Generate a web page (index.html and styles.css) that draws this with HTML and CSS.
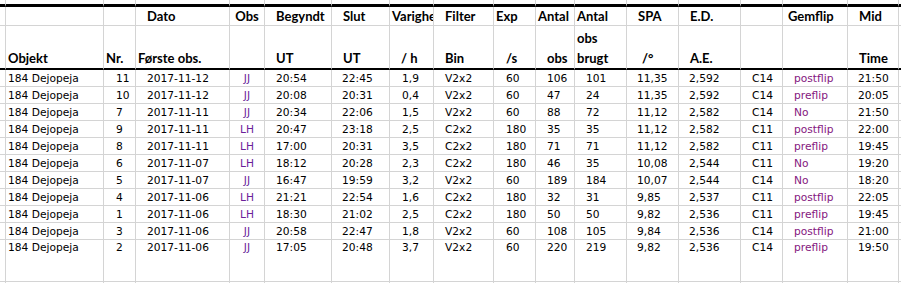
FILE: index.html
```html
<!DOCTYPE html>
<html lang="da">
<head>
    <meta charset="UTF-8">
    <title>184 Dejopeja - observationer</title>
    <link rel="stylesheet" href="styles.css">
</head>
<body>
    <table class="sheet">
        <colgroup>
            <col class="w-stub">
            <col class="w-objekt">
            <col class="w-nr">
            <col class="w-dato">
            <col class="w-obs">
            <col class="w-beg">
            <col class="w-slut">
            <col class="w-var">
            <col class="w-filter">
            <col class="w-exp">
            <col class="w-antal">
            <col class="w-brugt">
            <col class="w-spa">
            <col class="w-ed">
            <col class="w-tel">
            <col class="w-flip">
            <col class="w-mid">
            <col class="w-tail">
        </colgroup>
        <thead>
            <tr class="sliver">
                <td></td><td></td><td></td><td></td><td></td><td></td><td></td><td></td><td></td>
                <td></td><td></td><td></td><td></td><td></td><td></td><td></td><td></td><td></td>
            </tr>
            <tr class="head1">
                <th></th>
                <th></th>
                <th></th>
                <th>Dato</th>
                <th class="c">Obs</th>
                <th>Begyndt</th>
                <th>Slut</th>
                <th class="flush">Varighed</th>
                <th>Filter</th>
                <th class="flush">Exp</th>
                <th class="flush">Antal</th>
                <th class="flush">Antal</th>
                <th>SPA</th>
                <th>E.D.</th>
                <th></th>
                <th class="gem">Gemflip</th>
                <th>Mid</th>
                <th></th>
            </tr>
            <tr class="head2">
                <th></th>
                <th class="flush">Objekt</th>
                <th class="flush">Nr.</th>
                <th class="flush">Første obs.</th>
                <th></th>
                <th>UT</th>
                <th>UT</th>
                <th>/ h</th>
                <th>Bin</th>
                <th class="wide">/s</th>
                <th>obs</th>
                <th class="flush two">obs<br>brugt</th>
                <th class="deg">/°</th>
                <th>A.E.</th>
                <th></th>
                <th></th>
                <th>Time</th>
                <th></th>
            </tr>
        </thead>
        <tbody>
            <tr><td></td><td>184 Dejopeja</td><td>11</td><td>2017-11-12</td><td class="obs">JJ</td><td>20:54</td><td>22:45</td><td>1,9</td><td>V2x2</td><td>60</td><td>106</td><td>101</td><td>11,35</td><td>2,592</td><td>C14</td><td class="flip">postflip</td><td>21:50</td><td></td></tr>
            <tr><td></td><td>184 Dejopeja</td><td>10</td><td>2017-11-12</td><td class="obs">JJ</td><td>20:08</td><td>20:31</td><td>0,4</td><td>V2x2</td><td>60</td><td>47</td><td>24</td><td>11,35</td><td>2,592</td><td>C14</td><td class="flip">preflip</td><td>20:05</td><td></td></tr>
            <tr><td></td><td>184 Dejopeja</td><td>7</td><td>2017-11-11</td><td class="obs">JJ</td><td>20:34</td><td>22:06</td><td>1,5</td><td>V2x2</td><td>60</td><td>88</td><td>72</td><td>11,12</td><td>2,582</td><td>C14</td><td class="flip">No</td><td>21:50</td><td></td></tr>
            <tr><td></td><td>184 Dejopeja</td><td>9</td><td>2017-11-11</td><td class="obs">LH</td><td>20:47</td><td>23:18</td><td>2,5</td><td>C2x2</td><td>180</td><td>35</td><td>35</td><td>11,12</td><td>2,582</td><td>C11</td><td class="flip">postflip</td><td>22:00</td><td></td></tr>
            <tr><td></td><td>184 Dejopeja</td><td>8</td><td>2017-11-11</td><td class="obs">LH</td><td>17:00</td><td>20:31</td><td>3,5</td><td>C2x2</td><td>180</td><td>71</td><td>71</td><td>11,12</td><td>2,582</td><td>C11</td><td class="flip">preflip</td><td>19:45</td><td></td></tr>
            <tr><td></td><td>184 Dejopeja</td><td>6</td><td>2017-11-07</td><td class="obs">LH</td><td>18:12</td><td>20:28</td><td>2,3</td><td>C2x2</td><td>180</td><td>46</td><td>35</td><td>10,08</td><td>2,544</td><td>C11</td><td class="flip">No</td><td>19:20</td><td></td></tr>
            <tr><td></td><td>184 Dejopeja</td><td>5</td><td>2017-11-07</td><td class="obs">JJ</td><td>16:47</td><td>19:59</td><td>3,2</td><td>V2x2</td><td>60</td><td>189</td><td>184</td><td>10,07</td><td>2,544</td><td>C14</td><td class="flip">No</td><td>18:20</td><td></td></tr>
            <tr><td></td><td>184 Dejopeja</td><td>4</td><td>2017-11-06</td><td class="obs">LH</td><td>21:21</td><td>22:54</td><td>1,6</td><td>C2x2</td><td>180</td><td>32</td><td>31</td><td>9,85</td><td>2,537</td><td>C11</td><td class="flip">postflip</td><td>22:05</td><td></td></tr>
            <tr><td></td><td>184 Dejopeja</td><td>1</td><td>2017-11-06</td><td class="obs">LH</td><td>18:30</td><td>21:02</td><td>2,5</td><td>C2x2</td><td>180</td><td>50</td><td>50</td><td>9,82</td><td>2,536</td><td>C11</td><td class="flip">preflip</td><td>19:45</td><td></td></tr>
            <tr><td></td><td>184 Dejopeja</td><td>3</td><td>2017-11-06</td><td class="obs">JJ</td><td>20:58</td><td>22:47</td><td>1,8</td><td>V2x2</td><td>60</td><td>108</td><td>105</td><td>9,84</td><td>2,536</td><td>C14</td><td class="flip">postflip</td><td>21:00</td><td></td></tr>
            <tr class="last"><td></td><td>184 Dejopeja</td><td>2</td><td>2017-11-06</td><td class="obs">JJ</td><td>17:05</td><td>20:48</td><td>3,7</td><td>V2x2</td><td>60</td><td>220</td><td>219</td><td>9,82</td><td>2,536</td><td>C14</td><td class="flip">preflip</td><td>19:50</td><td></td></tr>
            <tr class="next">
                <td></td><td></td><td></td><td></td><td></td><td></td><td></td><td></td><td></td>
                <td></td><td></td><td></td><td></td><td></td><td></td><td></td><td></td><td></td>
            </tr>
        </tbody>
    </table>
</body>
</html>
```

FILE: styles.css
```css
body {
    margin: 0;
    background-color: white;
    overflow: hidden;
}
.sheet {
    table-layout: fixed;
    border-collapse: separate;
    border-spacing: 0;
    width: 902px;
    color: #000;
}
.w-stub { width: 6px; }
.w-objekt { width: 98px; }
.w-nr { width: 32px; }
.w-dato { width: 94px; }
.w-obs { width: 35px; }
.w-beg { width: 67px; }
.w-slut { width: 58px; }
.w-var { width: 44px; }
.w-filter { width: 60px; }
.w-exp { width: 42px; }
.w-antal { width: 39px; }
.w-brugt { width: 52px; }
.w-spa { width: 52px; }
.w-ed { width: 62px; }
.w-tel { width: 42px; }
.w-flip { width: 65px; }
.w-mid { width: 51px; }
.w-tail { width: 3px; }

.sheet th,
.sheet td {
    box-sizing: border-box;
    padding: 0;
    border-right: 1px solid #d4d4d4;
    border-bottom: 1px solid #d4d4d4;
    white-space: nowrap;
    overflow: hidden;
    vertical-align: top;
    text-align: left;
}
.sheet th:last-child,
.sheet td:last-child {
    border-right: none;
}

/* top row is only a sliver of the row above */
.sheet .sliver td {
    height: 7px;
    border-bottom: 3px solid #000;
}

.sheet th {
    font-family: Lato, "Liberation Sans", sans-serif;
    font-weight: 700;
    font-size: 13px;
    padding-left: 11px;
}
.head1 th {
    height: 19px;
    line-height: 16px;
    padding-top: 1px;
}
.head2 th {
    height: 42px;
    line-height: 20px;
    padding-top: 22px;
    border-bottom: 2px solid #000;
}
.head2 th.two {
    padding-top: 2px;
}
.sheet th.flush { padding-left: 2px; }
.sheet th.gem { padding-left: 5px; }
.sheet th.wide { padding-left: 12px; }
.sheet th.deg { padding-left: 15px; }
.sheet th.c {
    padding-left: 0;
    text-align: center;
}

.sheet tbody td {
    font-family: "DejaVu Sans", Verdana, sans-serif;
    font-size: 10.67px;
    height: 17px;
    line-height: 14px;
    padding-top: 2px;
    padding-left: 11px;
}
.sheet tbody td:nth-child(2) { padding-left: 2px; }
.sheet tbody td:nth-child(3),
.sheet tbody td:nth-child(8),
.sheet tbody td:nth-child(10) { padding-left: 12px; }
.sheet tbody td:nth-child(7),
.sheet tbody td:nth-child(13),
.sheet tbody td:nth-child(14),
.sheet tbody td:nth-child(17) { padding-left: 10px; }
.sheet tbody td.obs {
    padding-left: 0;
    text-align: center;
    color: #6a1f9a;
}
.sheet tbody td.flip {
    color: #84167e;
}
.sheet tbody .last td {
    height: 42px;
    padding-top: 1px;
}
.sheet tbody .next td {
    height: 10px;
}
```
